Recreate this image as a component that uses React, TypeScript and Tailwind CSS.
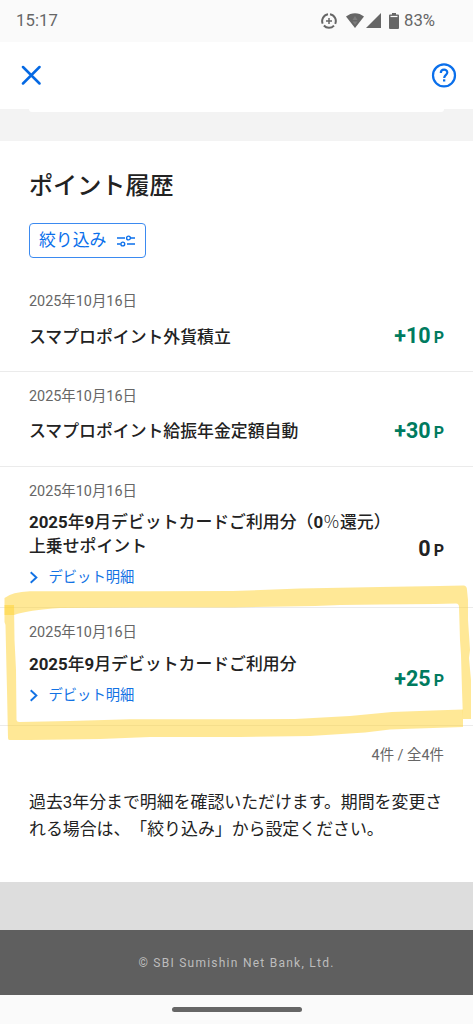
import { clsx } from "clsx";

type HistoryItem = {
  date: string;
  title: string[];
  points: string;
  gain: boolean;
  hasDetail: boolean;
  heightClass: string;
  titleClass: string;
};

const items: HistoryItem[] = [
  {
    date: "2025年10月16日",
    title: ["スマプロポイント外貨積立"],
    points: "+10",
    gain: true,
    hasDetail: false,
    heightClass: "h-[95px]",
    titleClass: "mt-[13px]",
  },
  {
    date: "2025年10月16日",
    title: ["スマプロポイント給振年金定額自動"],
    points: "+30",
    gain: true,
    hasDetail: false,
    heightClass: "h-[95px]",
    titleClass: "mt-3",
  },
  {
    date: "2025年10月16日",
    title: ["2025年9月デビットカードご利用分（0％還元）", "上乗せポイント"],
    points: "0",
    gain: false,
    hasDetail: true,
    heightClass: "h-[141px]",
    titleClass: "mt-2",
  },
  {
    date: "2025年10月16日",
    title: ["2025年9月デビットカードご利用分"],
    points: "+25",
    gain: true,
    hasDetail: true,
    heightClass: "h-[118px]",
    titleClass: "mt-[9px]",
  },
];

function StatusBar() {
  return (
    <div className="flex h-[42px] items-center justify-between bg-[#fafafa] pl-4 pr-[38px] text-[16.7px] text-[#666]">
      <span className="tracking-[0.1px]">15:17</span>
      <div className="flex items-center">
        <svg width="16" height="16" viewBox="0 0 16 16" fill="none" stroke="#666">
          <path d="M9 1.3A6.8 6.8 0 0 1 14.2 10.8M13 12.6A6.8 6.8 0 0 1 2.9 12.5M1.7 10.7A6.8 6.8 0 0 1 7 1.3" strokeWidth="2" />
          <path d="M8 5v6M5 8h6" strokeWidth="1.5" />
        </svg>
        <svg width="18" height="15" viewBox="0 0 18 15" className="ml-[9px]">
          <path d="M0 3.6C5.4-.9 12.6-.9 18 3.6L9 15z" fill="#666" />
          <path d="M9 3 6.5 7h5zM6.5 8.5h5L9 12z" fill="#7c7c7c" />
        </svg>
        <svg width="15" height="15" viewBox="0 0 15 15" className="ml-[2px]">
          <path d="M15 0v15H0z" fill="#666" />
        </svg>
        <svg width="10" height="16" viewBox="0 0 10 16" className="ml-[8px]">
          <path d="M3 0h4v1.5h2q1 0 1 1V15q0 1-1 1H1q-1 0-1-1V2.500q0-1 1-1h2z" fill="#666" />
          <path d="M1.500 3.500h7" stroke="#fafafa" strokeWidth="1.200" />
        </svg>
        <span className="ml-[5px]">83%</span>
      </div>
    </div>
  );
}

function Header() {
  return (
    <header className="flex h-[67px] items-center justify-between bg-white pb-px pl-[21px] pr-4">
      <svg width="20" height="20" viewBox="0 0 20 20" fill="none" stroke="#0569e3" strokeWidth="2.5" strokeLinecap="round">
        <path d="m2 2 16.500 16.500M18.500 2 2 18.500" />
      </svg>
      <svg width="26" height="26" viewBox="0 0 26 26" fill="none" stroke="#0a6feb" strokeWidth="2.2">
        <circle cx="13" cy="13.4" r="11" />
        <path d="M9.800 10.900c0-4.200 6.500-4.200 6.500-.4 0 2.200-3.100 2.600-3.100 5.400" />
        <path d="M12 17.300h2.300v2.200H12z" fill="#0a6feb" stroke="none" />
      </svg>
    </header>
  );
}

function DetailLink() {
  return (
    <a className="flex h-[21px] items-center text-[14.3px] text-[#1272e4]">
      <svg width="9" height="13" viewBox="0 0 9 13" fill="none" stroke="currentColor" strokeWidth="1.9">
        <path d="M1.700 1.200 7.400 6.500 1.700 11.800" />
      </svg>
      <span className="ml-[10.500px]">デビット明細</span>
    </a>
  );
}

function HistoryRow({ item }: { item: HistoryItem }) {
  return (
    <li
      className={clsx(
        "flex items-start justify-between border-b border-[#ebebeb] pl-[29px] pr-[29px]",
        item.heightClass,
      )}
    >
      <div className="pt-[15px]">
        <p className="h-5 text-[14.4px] leading-5 text-[#666]">{item.date}</p>
        <div
          className={clsx(
            "text-[16.88px] font-medium leading-6 text-[#222]",
            item.titleClass,
          )}
        >
          {item.title.map((line) => (
            <p key={line} className="whitespace-nowrap">
              {line.split(/([0-9]+|％)/).map((part, i) => (
                <span
                  key={i}
                  className={clsx(
                    part === "％" ? "font-light" : i % 2 === 1 && "font-bold",
                  )}
                >
                  {part}
                </span>
              ))}
            </p>
          ))}
        </div>
        {item.hasDetail && (
          <div className="mt-[9px]">
            <DetailLink />
          </div>
        )}
      </div>
      <p
        className={clsx(
          "flex items-baseline self-center font-bold leading-7",
          item.gain ? "text-[#007b5f]" : "text-[#222]",
          item.hasDetail && !item.gain ? "mt-[25px]" : "mt-[26px]",
        )}
      >
        <span className="text-[21.5px]">{item.points}</span>
        <span className="ml-[3px] text-[16px]">P</span>
      </p>
    </li>
  );
}

// Hand-drawn marker around the last entry, two overlapping strokes.
function Marker() {
  return (
    <svg
      className="pointer-events-none absolute left-0 top-[580px]"
      width="473"
      height="170"
      viewBox="0 580 473 170"
      fill="#ffd22d"
      fillOpacity="0.5"
    >
      <path d="M4.500 598Q12 592 30 591.300L150 591.300 233 591 300 588.500 380 587 440 586 464 585.500Q467 586 467 590L468 600 468 620 470 650 469 658 471 680 471 719H463L462 690 461 655 460 640 459 607Q459 603.500 456 603.500L435 604 380 604.500 340 605 315 606 233 607.500 150 607.500 60 608 Q28 610 14 615H4.500Z" />
      <path d="M4.500 605H14L14.500 640 16 670 16.500 720Q17 722.500 20 722L70 721 130 719.200 233 719.200 295 719 350 716 392 712 440 710.300 463 709.500V727L410 728.800 390 729.500 365 732.500 310 736 240 737 150 737 100 739 30 740H9.500Q8 740 8 738L7 690 6.500 670 5.500 625 4.500 622Z" />
    </svg>
  );
}

export default function App() {
  return (
    <div className="relative flex h-[1024px] w-full flex-col overflow-hidden bg-white font-[Roboto,'Noto_Sans_CJK_JP',sans-serif] [text-spacing-trim:space-all]">
      <StatusBar />
      <Header />
      <div className="h-8 bg-[#f3f3f3] px-[29px]">
        <div className="h-[3px] rounded-b-[8px] bg-white" />
      </div>

      <main className="flex h-[741px] flex-col">
        <h1 className="ml-[29px] mt-[29px] h-8 text-[24.1px] font-medium leading-8 text-[#222]">
          ポイント履歴
        </h1>
        <button className="ml-[29px] mt-[21px] flex h-[35px] w-[117px] shrink-0 items-center rounded-[4px] border border-[#3b8af0] pl-[9px] text-[16.88px] text-[#0a6feb]">
          絞り込み
          <svg width="18" height="12" viewBox="0 0 18 12" fill="none" stroke="currentColor" strokeWidth="1.4" className="ml-[11px]">
            <path d="M0 3h8M14 3h4M0 9h3.500M10 9h8" />
            <circle cx="11.500" cy="3" r="1.900" />
            <circle cx="5.800" cy="9" r="1.900" />
          </svg>
        </button>

        <ul className="mt-[19px]">
          {items.map((item, index) => (
            <HistoryRow key={index} item={item} />
          ))}
        </ul>

        <p className="mr-[29px] mt-[20px] h-5 text-right text-[14.4px] leading-5 text-[#666]">
          4件 / 全4件
        </p>
        <p className="ml-[29px] mt-[23px] whitespace-nowrap text-[16.9px] leading-[27px] text-[#222]">
          過去3年分まで明細を確認いただけます。期間を変更さ
          <br />
          れる場合は、「絞り込み」から設定ください。
        </p>
      </main>

      <div className="h-[48px] bg-[#ddd]" />
      <footer className="flex h-[65px] items-center justify-center bg-[#5f5f5f] text-[12px] tracking-[1.25px] text-[#bdbdbd]">
        © SBI Sumishin Net Bank, Ltd.
      </footer>
      <div className="flex h-[29px] justify-center bg-[#fafafa] pt-[12px]">
        <div className="h-[5px] w-[130px] rounded-full bg-[#666]" />
      </div>

      <Marker />
    </div>
  );
}
